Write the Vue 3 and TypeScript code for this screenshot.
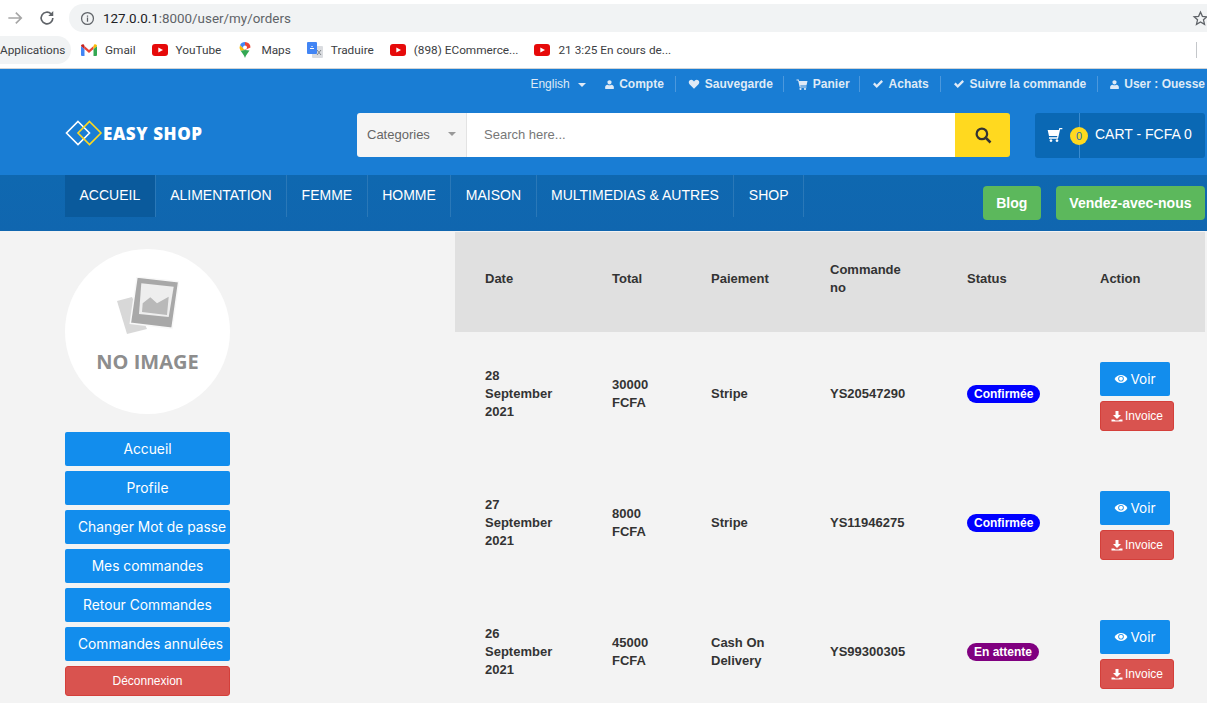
<script setup lang="ts">
const bookmarks = [
  { icon: 'gmail', label: 'Gmail' },
  { icon: 'yt', label: 'YouTube' },
  { icon: 'maps', label: 'Maps' },
  { icon: 'translate', label: 'Traduire' },
  { icon: 'yt', label: '(898) ECommerce...' },
  { icon: 'yt', label: '21 3:25 En cours de...' },
]

const topLinks = [
  { icon: 'user', label: 'Compte' },
  { icon: 'heart', label: 'Sauvegarde' },
  { icon: 'cart', label: 'Panier' },
  { icon: 'check', label: 'Achats' },
  { icon: 'check', label: 'Suivre la commande' },
  { icon: 'user', label: 'User : Ouesse' },
]

const icons: Record<string, string> = {
  user: 'M12 12c-3 0-4.500-2.600-4.500-5.200C7.500 4 9.500 2.500 12 2.500s4.500 1.500 4.500 4.300C16.500 9.400 15 12 12 12zM2.500 20.500v-3C2.500 14.500 5 13 8 12.500c1 .8 2.500 1.200 4 1.200s3-.4 4-1.200c3 .5 5.500 2 5.500 5v3c0 1-.8 1.500-1.500 1.500H4c-.7 0-1.500-.5-1.500-1.500z',
  heart: 'M12 21.500 3 12.500C1 10.400 1 7 3 5c2-2 5.200-2 7.200 0L12 6.800 13.800 5c2-2 5.200-2 7.200 0 2 2 2 5.400 0 7.500z',
  cart: 'M1 3h4.500l.7 3H23l-2 9H8.500L9 17h12v2H7.500L4.300 5H1zM9 20a2 2 0 1 0 .01 0zM18 20a2 2 0 1 0 .01 0z',
  check: 'M9.500 20 2 12.500l3.300-3.300 4.200 4.200 9.200-9.200 3.300 3.300z',
}

const navItems = ['ACCUEIL', 'ALIMENTATION', 'FEMME', 'HOMME', 'MAISON', 'MULTIMEDIAS & AUTRES', 'SHOP']

const menu = ['Accueil', 'Profile', 'Changer Mot de passe', 'Mes commandes', 'Retour Commandes', 'Commandes annulées']

const orders = [
  { date: '28 September 2021', total: '30000 FCFA', payment: 'Stripe', no: 'YS20547290', status: 'Confirmée', kind: 'ok' },
  { date: '27 September 2021', total: '8000 FCFA', payment: 'Stripe', no: 'YS11946275', status: 'Confirmée', kind: 'ok' },
  { date: '26 September 2021', total: '45000 FCFA', payment: 'Cash On Delivery', no: 'YS99300305', status: 'En attente', kind: 'wait' },
]
</script>

<template>
  <div class="page">
    <!-- browser chrome -->
    <div class="toolbar">
      <svg class="tb-arrow" viewBox="0 0 24 24" width="20" height="20"><path d="M4 12h15M13 5.500 19.500 12 13 18.500" fill="none" stroke="#a6a6a6" stroke-width="2" /></svg>
      <svg class="tb-reload" viewBox="0 0 24 24" width="20" height="20"><path d="M19 12a7 7 0 1 1-2.100-5" fill="none" stroke="#5f6368" stroke-width="2" /><path d="M19.500 3.500v6h-6z" fill="#5f6368" /></svg>
      <div class="address">
        <svg viewBox="0 0 24 24" width="15" height="15"><circle cx="12" cy="12" r="9.500" fill="none" stroke="#5f6368" stroke-width="2" /><path d="M11 10.500h2V17h-2zM11 7h2v2h-2z" fill="#5f6368" /></svg>
        <span class="url"><span class="url-host">127.0.0.1</span>:8000/user/my/orders</span>
        <svg class="star" viewBox="0 0 24 24" width="17" height="17"><path d="m12 3 2.700 6 6.300.6-4.800 4.200 1.500 6.400L12 16.800l-5.700 3.400 1.500-6.400L3 9.600 9.300 9z" fill="none" stroke="#5f6368" stroke-width="1.800" /></svg>
      </div>
    </div>
    <div class="bookmarks">
      <span class="apps">Applications</span>
      <span v-for="b in bookmarks" :key="b.label" class="bookmark">
        <svg v-if="b.icon === 'gmail'" viewBox="0 0 16 12">
          <path d="M0 2v9a1 1 0 0 0 1 1h2.500V5z" fill="#4285f4" />
          <path d="M16 2v9a1 1 0 0 1-1 1h-2.500V5z" fill="#34a853" />
          <path d="M3.500 5v-3L8 6l4.500-4v3L8 9z" fill="#ea4335" />
          <path d="M0 2c0-1.500 1.800-2.300 3-1.300L3.500 2v3z" fill="#c5221f" />
          <path d="M16 2c0-1.500-1.800-2.300-3-1.300L12.500 2v3z" fill="#fbbc04" />
        </svg>
        <svg v-else-if="b.icon === 'yt'" viewBox="0 0 16 12">
          <rect width="16" height="12" rx="3" fill="#e60a0a" />
          <path d="M6.300 3.500 11 6l-4.700 2.500z" fill="#fff" />
        </svg>
        <svg v-else-if="b.icon === 'maps'" viewBox="0 0 12 16">
          <path d="M6 0a5.500 5.500 0 0 1 5.500 5.500L6 8z" fill="#ea4335" />
          <path d="M6 0a5.500 5.500 0 0 0-5 3.200L6 8z" fill="#4285f4" />
          <path d="M1 3.200a5.500 5.500 0 0 0 .6 5.500L6 8z" fill="#fbbc04" />
          <path d="M1.600 8.700C3 11 5 12.500 6 16c1-3.500 3-5 4.500-7.500L6 8z" fill="#34a853" />
          <circle cx="6" cy="5.500" r="2" fill="#fff" />
        </svg>
        <svg v-else viewBox="0 0 16 16">
          <rect x="5" y="4" width="11" height="12" rx="1" fill="#dadce0" />
          <rect width="10" height="12" rx="1" fill="#4285f4" />
          <path d="M3 6.500h4M5 4v1" stroke="#fff" stroke-width="1.200" />
          <path d="M10 8l4 5M14 8l-4 5" stroke="#80868b" stroke-width="1" />
        </svg>
        <span>{{ b.label }}</span>
      </span>
      <span class="bm-divider"></span>
    </div>

    <!-- site header -->
    <header class="site-header">
      <div class="topbar">
        <span class="lang">English <i class="caret caret-white"></i></span>
        <span v-for="l in topLinks" :key="l.label" class="top-link">
          <svg :class="'ic-' + l.icon" viewBox="0 0 24 24"><path :d="icons[l.icon]" fill="#dfeaf6" /></svg>
          {{ l.label }}
        </span>
      </div>
      <div class="mainbar">
        <div class="logo">
          <svg viewBox="0 0 38 26" width="38" height="26">
            <path d="M13 1.500 24.500 13 13 24.500 1.500 13z" fill="none" stroke="#fff" stroke-width="1.600" />
            <path d="M24.500 1.500 36 13 24.500 24.500 13 13z" fill="none" stroke="#ffd91f" stroke-width="1.600" />
          </svg>
          <span>EASY SHOP</span>
        </div>
        <div class="search">
          <div class="cat">Categories <i class="caret caret-grey"></i></div>
          <div class="search-input">Search here...</div>
          <div class="search-btn">
            <svg viewBox="0 0 24 24" width="18" height="18"><circle cx="10.500" cy="10.500" r="7" fill="none" stroke="#333" stroke-width="3" /><path d="m16 16 6 6" stroke="#333" stroke-width="3.400" /></svg>
          </div>
        </div>
        <div class="cart">
          <div class="cart-icon">
            <svg viewBox="0 0 24 24" width="16" height="16"><path :d="icons.cart" fill="#fff" transform="matrix(-1 0 0 1 24 0)" /></svg>
            <span class="badge">0</span>
          </div>
          <span class="cart-text">CART - FCFA 0</span>
        </div>
      </div>
      <nav class="navbar">
        <ul class="nav-list">
          <li v-for="(n, i) in navItems" :key="n" :class="{ active: i === 0 }">{{ n }}</li>
        </ul>
        <div class="nav-actions">
          <span class="green-btn">Blog</span>
          <span class="green-btn">Vendez-avec-nous</span>
        </div>
      </nav>
    </header>

    <main class="content">
      <aside class="sidebar">
        <div class="avatar">
          <svg viewBox="0 0 62 58" width="62" height="58">
            <path d="M0 24 15 20 30 52 10 57z" fill="#d8d8d8" />
            <path d="M20 0 61.700 4.700 55 51.300 13.300 46.300z" fill="#a8a8a8" stroke="#f8f8f8" stroke-width="1.500" />
            <path d="M24.300 6.300 56.700 9.700 51.700 40 22 37z" fill="#eeeeee" />
            <path d="M25 35 25.700 26.300 33.300 20.300 40 26.300 51.700 19.700 50 38z" fill="#b9b9b9" />
          </svg>
          <span class="no-image">NO IMAGE</span>
        </div>
        <div class="menu">
          <a v-for="m in menu" :key="m" class="menu-btn">{{ m }}</a>
          <a class="logout-btn">Déconnexion</a>
        </div>
      </aside>

      <section class="orders">
        <table>
          <colgroup>
            <col style="width: 127px" />
            <col style="width: 99px" />
            <col style="width: 119px" />
            <col style="width: 137px" />
            <col style="width: 133px" />
            <col style="width: 135px" />
          </colgroup>
          <thead>
            <tr>
              <th>Date</th>
              <th>Total</th>
              <th>Paiement</th>
              <th>Commande no</th>
              <th>Status</th>
              <th>Action</th>
            </tr>
          </thead>
          <tbody>
            <tr v-for="o in orders" :key="o.no">
              <td>{{ o.date }}</td>
              <td>{{ o.total }}</td>
              <td>{{ o.payment }}</td>
              <td>{{ o.no }}</td>
              <td><span class="status" :class="o.kind">{{ o.status }}</span></td>
              <td class="actions">
                <a class="voir">
                  <svg viewBox="0 0 24 24" width="14" height="14"><path d="M1 12c2.500-4.500 6.500-7 11-7s8.500 2.500 11 7c-2.500 4.500-6.500 7-11 7S3.500 16.500 1 12z" fill="#fff" /><circle cx="12" cy="11.500" r="4.800" fill="#128ded" /><circle cx="12" cy="11.500" r="3.300" fill="#fff" /></svg>
                  Voir
                </a>
                <a class="invoice">
                  <svg viewBox="0 0 24 24" width="12" height="12"><path d="M9 2h6v8h5l-8 8-8-8h5zM1 19h5l3 2h6l3-2h5v4H1z" fill="#fff" /></svg>
                  Invoice
                </a>
              </td>
            </tr>
          </tbody>
        </table>
      </section>
    </main>
  </div>
</template>

<style>
html,
body {
  margin: 0;
  height: 100%;
  overflow: hidden;
  background: #f3f3f3;
}
</style>

<style scoped>
.page {
  font-family: "Liberation Sans", Arial, sans-serif;
  height: 703px;
  overflow: hidden;
}
.toolbar {
  height: 32px;
  display: flex;
  align-items: flex-start;
  background: #fff;
  box-sizing: border-box;
  padding-top: 4px;
}
.tb-arrow {
  margin: 4px 0 0 5px;
}
.tb-reload {
  margin: 4px 0 0 12px;
}
.address {
  margin-left: 12px;
  flex: 1;
  height: 28px;
  background: #f1f3f4;
  border-radius: 14px 0 0 14px;
  display: flex;
  align-items: center;
  padding-left: 11px;
  font-family: Roboto, sans-serif;
  font-size: 13.4px;
  color: #5f6368;
}
.url {
  margin-left: 8px;
}
.url-host {
  color: #202124;
}
.star {
  margin-left: auto;
  margin-right: -2px;
}
.bookmarks {
  height: 37px;
  box-sizing: border-box;
  background: #fff;
  border-bottom: 1px solid #d0d3d6;
  display: flex;
  align-items: center;
  font-family: Roboto, sans-serif;
  font-size: 11.8px;
  color: #3c4043;
}
.apps {
  height: 28px;
  line-height: 28px;
  width: 71px;
  background: #f1f3f4;
  border-radius: 0 14px 14px 0;
  margin-right: 10px;
}
.bookmark {
  display: inline-flex;
  align-items: center;
  gap: 8px;
  margin-right: 16px;
}
.bookmark svg {
  width: 16px;
  height: 16px;
  flex: none;
}
.bm-divider {
  margin-left: auto;
  margin-right: 10px;
  width: 1px;
  height: 16px;
  background: #c4c7ca;
}
.site-header {
  background: #197dd4;
}
.topbar {
  height: 30px;
  box-sizing: border-box;
  padding: 0 2px 0 0;
  display: flex;
  align-items: center;
  justify-content: flex-end;
  font-size: 12px;
  font-weight: 700;
  color: #dfeaf6;
  white-space: nowrap;
}
.lang {
  font-weight: 400;
  margin-right: 7px;
}
.top-link {
  display: inline-flex;
  align-items: center;
  gap: 4px;
  height: 16px;
  padding: 0 11px;
  border-right: 1px solid #4b98dd;
}
.top-link:nth-child(3) {
  padding-right: 10px;
}
.top-link:nth-child(4) {
  padding-right: 9px;
}
.top-link:last-child {
  border-right: none;
  padding-right: 0;
}
.ic-user {
  width: 11px;
  height: 11px;
}
.ic-heart,
.ic-cart,
.ic-check {
  width: 14px;
  height: 12px;
}
.caret {
  display: inline-block;
  width: 0;
  height: 0;
  border-left: 4px solid transparent;
  border-right: 4px solid transparent;
  vertical-align: middle;
  margin-left: 5px;
}
.caret-white {
  border-top: 4px solid #dfeaf6;
}
.caret-grey {
  border-top: 4px solid #999;
  margin-left: 18px;
}
.mainbar {
  display: flex;
  align-items: flex-start;
  box-sizing: border-box;
  height: 76px;
  padding: 14px 2px 0 65px;
}
.logo {
  width: 292px;
  height: 40px;
  display: flex;
  align-items: center;
  font-family: "Open Sans", sans-serif;
  font-weight: 800;
  font-size: 17px;
  letter-spacing: 0.6px;
  color: #fff;
}
.search {
  width: 653px;
  height: 44px;
  display: flex;
  font-size: 13px;
  margin-right: 25px;
}
.cat {
  width: 110px;
  box-sizing: border-box;
  padding-left: 10px;
  padding-bottom: 2px;
  display: flex;
  align-items: center;
  background: #f5f5f5;
  border-right: 1px solid #e3e3e3;
  border-radius: 3px 0 0 3px;
  color: #666;
}
.search-input {
  flex: 1;
  background: #fff;
  color: #777;
  display: flex;
  align-items: center;
  padding-left: 17px;
  padding-bottom: 2px;
}
.search-btn {
  width: 55px;
  background: #ffd91f;
  border-radius: 0 3px 3px 0;
  display: flex;
  align-items: center;
  justify-content: center;
}
.cart {
  width: 170px;
  height: 45px;
  background: #0a68b4;
  border-radius: 3px;
  display: flex;
  align-items: center;
  color: #fff;
  font-size: 14px;
}
.cart-icon {
  width: 45px;
  height: 100%;
  box-sizing: border-box;
  padding: 0 0 4px 12px;
  border-right: 1px solid #3a8bcf;
  display: flex;
  align-items: center;
  position: relative;
}
.badge {
  position: absolute;
  left: 35px;
  top: 14px;
  width: 18px;
  height: 18px;
  border-radius: 50%;
  background: #ffd91f;
  color: #2a6db0;
  font-size: 11px;
  line-height: 18px;
  text-align: center;
}
.cart-text {
  margin: 0 0 4px 15px;
  white-space: nowrap;
}
.navbar {
  height: 56px;
  display: flex;
  justify-content: space-between;
  padding: 0 2px 0 65px;
  background: linear-gradient(#0f68b0, #1066af);
}
.nav-list {
  display: flex;
  list-style: none;
  margin: 0;
  padding: 0;
  height: 42px;
}
.nav-list li {
  padding: 0 14.5px;
  line-height: 41px;
  font-size: 14px;
  color: #fff;
  border-right: 1px solid #2a78b8;
  white-space: nowrap;
}
.nav-list li.active {
  background: #0a5a9c;
}
.nav-actions {
  display: flex;
  gap: 15px;
  padding-top: 11px;
}
.green-btn {
  height: 34px;
  line-height: 34px;
  padding: 0 13.5px;
  background: #5cb85c;
  border-radius: 4px;
  color: #fff;
  font-weight: 700;
  font-size: 14px;
}
.content {
  display: flex;
  background: #f3f3f3;
}
.sidebar {
  width: 455px;
  flex: none;
  box-sizing: border-box;
  padding: 18px 0 0 65px;
}
.avatar {
  width: 165px;
  height: 165px;
  border-radius: 50%;
  background: #fff;
  display: flex;
  flex-direction: column;
  align-items: center;
  box-sizing: border-box;
  padding-top: 28px;
}
.no-image {
  font-family: "Open Sans", sans-serif;
  font-weight: 700;
  font-size: 20px;
  line-height: 24px;
  color: #8d8d8d;
  margin-top: 15px;
}
.menu {
  margin-top: 18px;
  width: 165px;
  display: flex;
  flex-direction: column;
  gap: 5px;
}
.menu-btn {
  height: 34px;
  line-height: 34px;
  box-sizing: border-box;
  padding: 0 13px;
  background: #128ded;
  color: #fff;
  border-radius: 2px;
  font-family: Inter, sans-serif;
  font-size: 13.8px;
  text-align: center;
  white-space: nowrap;
}
.logout-btn {
  height: 30px;
  line-height: 28px;
  box-sizing: border-box;
  background: #d9534f;
  border: 1px solid #d43f3a;
  border-radius: 3px;
  color: #fff;
  font-size: 12px;
  text-align: center;
}
.orders {
  width: 750px;
  flex: none;
  margin-top: 1px;
}
table {
  border-collapse: collapse;
  table-layout: fixed;
  width: 750px;
  font-size: 13px;
  font-weight: 700;
  color: #333;
}
th {
  height: 100px;
  box-sizing: border-box;
  background: #e0e0e0;
  padding: 0 30px 6px;
  text-align: left;
  line-height: 18px;
}
td {
  height: 129px;
  box-sizing: border-box;
  padding: 0 30px 5px;
  line-height: 18px;
}
.status {
  display: inline-block;
  height: 18px;
  line-height: 18px;
  padding: 0 7px;
  border-radius: 9px;
  font-size: 12px;
  color: #fff;
  white-space: nowrap;
}
.status.ok {
  background: #0000ff;
}
.status.wait {
  background: #800080;
}
td.actions {
  padding: 0 0 0 30px;
}
.voir,
.invoice {
  display: flex;
  align-items: center;
  justify-content: center;
  gap: 2px;
  color: #fff;
  box-sizing: border-box;
  font-weight: 400;
}
.voir {
  width: 70px;
  height: 34px;
  background: #128ded;
  border-radius: 2px;
  font-family: Inter, sans-serif;
  font-size: 13.5px;
}
.invoice {
  margin-top: 5px;
  width: 74px;
  height: 30px;
  background: #d9534f;
  border: 1px solid #d43f3a;
  border-radius: 3px;
  font-size: 12px;
}
</style>
